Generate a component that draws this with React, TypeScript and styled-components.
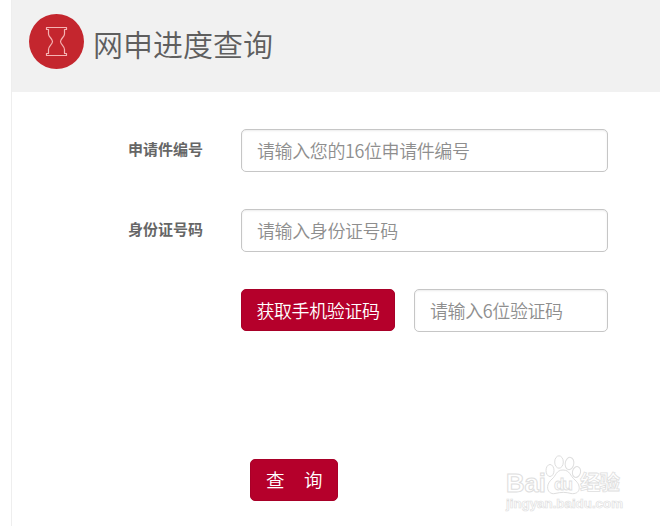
import styled, { createGlobalStyle } from 'styled-components';

const GlobalStyle = createGlobalStyle`
  * {
    box-sizing: border-box;
  }

  body {
    margin: 0;
    background: #fff;
    overflow: hidden;
    font-family: 'Noto Sans CJK SC', sans-serif;
  }
`;

const Page = styled.div`
  position: relative;
  height: 526px;
  margin-left: 11px;
  border-left: 1px solid #eee;
  overflow: hidden;
`;

const Header = styled.header`
  display: flex;
  align-items: center;
  height: 92px;
  padding: 0 0 9px 17px;
  background: #f1f1f1;
`;

const Title = styled.h1`
  margin: 3px 0 0 9px;
  font-size: 30px;
  font-weight: 350;
  line-height: 44px;
  color: #5e5e5e;
`;

const Form = styled.form`
  display: flex;
  flex-direction: column;
  gap: 37px;
  padding-top: 37px;
`;

const Row = styled.div`
  display: flex;
  height: 43px;
`;

const Label = styled.label`
  width: 191px;
  margin-right: 38px;
  font-size: 15px;
  font-weight: 700;
  line-height: 39px;
  text-align: right;
  color: #666;
`;

const Input = styled.input<{ $width: number }>`
  width: ${({ $width }) => $width}px;
  height: 43px;
  padding: 0 15px 2px;
  border: 1px solid #c6c6c6;
  border-radius: 5px;
  outline: none;
  background: #fff;
  box-shadow: inset 0 1px 2px rgba(0, 0, 0, 0.08);
  font-family: inherit;
  font-size: 18px;
  font-weight: 350;
  letter-spacing: -0.4px;

  &::placeholder {
    color: #8e8e8e;
    opacity: 1;
  }
`;

const Button = styled.button<{ $width: number }>`
  width: ${({ $width }) => $width}px;
  height: 42px;
  padding: 0;
  border: 1px solid #a80028;
  border-radius: 5px;
  background: #b5002b;
  font-family: inherit;
  font-size: 18px;
  font-weight: 350;
  letter-spacing: -0.4px;
  color: #fff;
`;

const SubmitButton = styled(Button)`
  display: flex;
  align-items: center;
  justify-content: center;
  gap: 20px;
  padding-bottom: 2px;
  font-size: 18.5px;
`;

const CodeRow = styled(Row)`
  gap: 19px;
  padding-left: 229px;
`;

const SubmitRow = styled(Row)`
  margin-top: 90px;
  padding-left: 238px;
`;

const Watermark = styled.svg`
  position: absolute;
  left: 490px;
  top: 452px;
`;

const HourglassIcon = () => (
  <svg width="55" height="55" viewBox="0 0 55 55" fill="none">
    <circle cx="27.5" cy="27.5" r="27.5" fill="#c4262e" />
    <path
      d="M17.5 13.5H37.5V15.5H35.5V20C35.5 23 31.5 24.5 31.5 27.5S35.5 32 35.5 35.5V39.5H37.5V41.5H17.5V39.5H19.5V35.5C19.5 32 23.5 30.5 23.5 27.5S19.5 23 19.5 20V15.5H17.5Z"
      stroke="#f5b3b3"
      strokeWidth="1.2"
      strokeLinejoin="round"
    />
  </svg>
);

const BaiduWatermark = () => (
  <Watermark
    width="130"
    height="66"
    viewBox="0 0 130 66"
    fill="#fff"
    stroke="#dedede"
    strokeWidth="1"
    fontFamily="'Liberation Sans', 'Noto Sans CJK SC', sans-serif"
    fontWeight="700"
  >
    <text x="4" y="39.5" fontSize="25" textLength="40" lengthAdjust="spacingAndGlyphs">Bai</text>
    <ellipse cx="48" cy="18.5" rx="4" ry="6" />
    <ellipse cx="57" cy="10" rx="4.3" ry="6.2" />
    <ellipse cx="67.5" cy="11.5" rx="4.3" ry="6.2" transform="rotate(10 67.5 11.5)" />
    <ellipse cx="74.5" cy="20" rx="4" ry="5.5" transform="rotate(15 74.5 20)" />
    <path d="M61 18C54 18 54 24 50 27C42 34 46 43 53 41.5C59 40 64 40 69 41.5C78 43 80 34 73 28C68 24 68 18 61 18Z" />
    <text x="52" y="38" fontSize="17" textLength="19" strokeWidth="0.8">du</text>
    <text x="78" y="38" fontSize="20.5" textLength="40" strokeWidth="0.8" fontFamily="'Noto Sans CJK SC', sans-serif">经验</text>
    <text x="4" y="55.5" fontSize="12" textLength="117" strokeWidth="0.6" lengthAdjust="spacingAndGlyphs">jingyan.baidu.com</text>
  </Watermark>
);

const App = () => {
  return (
    <>
      <GlobalStyle />
      <Page>
        <Header>
          <HourglassIcon />
          <Title>网申进度查询</Title>
        </Header>
        <Form>
          <Row>
            <Label htmlFor="application">申请件编号</Label>
            <Input id="application" $width={367} placeholder="请输入您的16位申请件编号" />
          </Row>
          <Row>
            <Label htmlFor="identity">身份证号码</Label>
            <Input id="identity" $width={367} placeholder="请输入身份证号码" />
          </Row>
          <CodeRow>
            <Button type="button" $width={154}>获取手机验证码</Button>
            <Input $width={194} placeholder="请输入6位验证码" />
          </CodeRow>
          <SubmitRow>
            <SubmitButton type="button" $width={88}>
              <span>查</span>
              <span>询</span>
            </SubmitButton>
          </SubmitRow>
        </Form>
        <BaiduWatermark />
      </Page>
    </>
  );
};

export default App;
